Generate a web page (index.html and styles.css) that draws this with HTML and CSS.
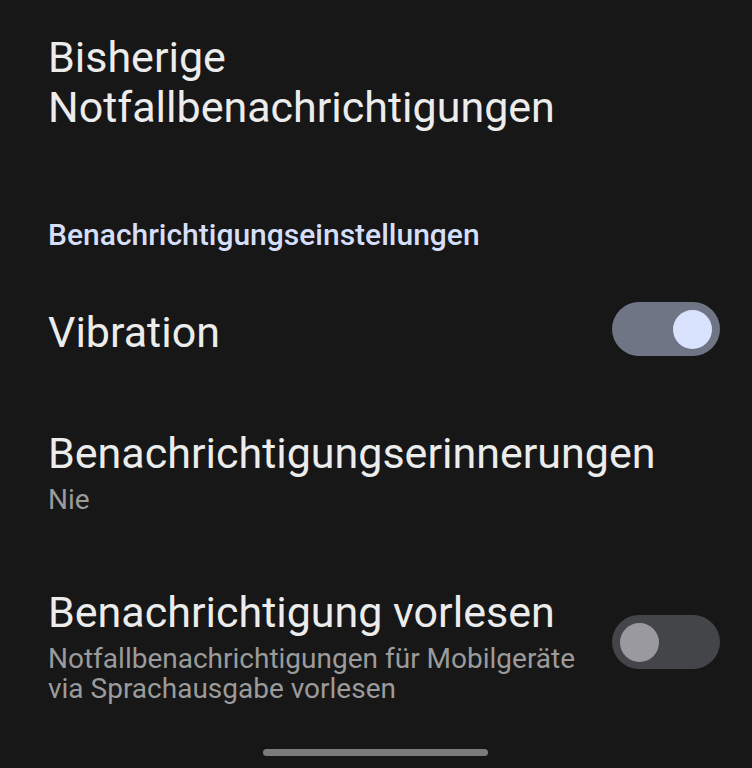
FILE: index.html
```html
<!DOCTYPE html>
<html lang="de">
<head>
    <meta charset="UTF-8">
    <meta name="viewport" content="width=device-width, initial-scale=1.0">
    <title>Notfallbenachrichtigungen</title>
    <link rel="stylesheet" href="styles.css">
</head>
<body>
    <div class="screen">
        <div class="pref title-pref">
            <div class="pref-text">
                <div class="pref-title">Bisherige<br>Notfallbenachrichtigungen</div>
            </div>
        </div>

        <div class="category">Benachrichtigungseinstellungen</div>

        <div class="pref switch-pref">
            <div class="pref-text">
                <div class="pref-title">Vibration</div>
            </div>
            <div class="switch on"><span class="thumb"></span></div>
        </div>

        <div class="pref reminder-pref">
            <div class="pref-text">
                <div class="pref-title">Benachrichtigungserinnerungen</div>
                <div class="pref-summary">Nie</div>
            </div>
        </div>

        <div class="pref speak-pref">
            <div class="pref-text">
                <div class="pref-title">Benachrichtigung vorlesen</div>
                <div class="pref-summary">Notfallbenachrichtigungen für Mobilgeräte via Sprachausgabe vorlesen</div>
            </div>
            <div class="switch off"><span class="thumb"></span></div>
        </div>

        <div class="nav-handle"></div>
    </div>
</body>
</html>
```

FILE: styles.css
```css
html, body {
    margin: 0;
    padding: 0;
    background-color: #171717;
}
body {
    font-family: Roboto, 'Noto Sans', sans-serif;
    color: #ebebeb;
}
.screen {
    width: 752px;
    height: 768px;
    position: relative;
    overflow: hidden;
}
.pref {
    display: flex;
    align-items: flex-start;
    padding: 0 32px 0 48px;
}
.pref-text {
    flex: 1;
}
.pref-title {
    font-size: 43px;
    line-height: 50px;
    color: #ececec;
}
.pref-summary {
    font-size: 28px;
    line-height: 31px;
    color: #9b9b9b;
    margin-top: 6px;
}
.title-pref {
    padding-top: 32px;
}
.category {
    padding: 85px 48px 0;
    font-size: 30px;
    font-weight: 500;
    line-height: 36px;
    color: #d5dffa;
}
.switch-pref {
    margin-top: 49px;
}
.switch-pref .pref-text {
    padding-top: 5px;
}
.reminder-pref {
    margin-top: 71px;
}
.speak-pref {
    margin-top: 72px;
}
.speak-pref .switch {
    margin-top: 28px;
}
.speak-pref .pref-summary {
    width: 545px;
    line-height: 30px;
    margin-top: 7px;
}
.switch {
    flex-shrink: 0;
    width: 108px;
    height: 54px;
    border-radius: 27px;
    display: flex;
    align-items: center;
    box-sizing: border-box;
    padding: 0 8px;
}
.switch .thumb {
    width: 39px;
    height: 39px;
    border-radius: 50%;
}
.switch.on {
    background: #6f7585;
    justify-content: flex-end;
}
.switch.on .thumb {
    background: #d9e3fd;
}
.switch.off {
    background: #444549;
}
.switch.off .thumb {
    background: #9a999f;
}
.nav-handle {
    position: absolute;
    left: 263px;
    top: 749px;
    width: 225px;
    height: 7px;
    border-radius: 4px;
    background: #7b7b7b;
}
```
